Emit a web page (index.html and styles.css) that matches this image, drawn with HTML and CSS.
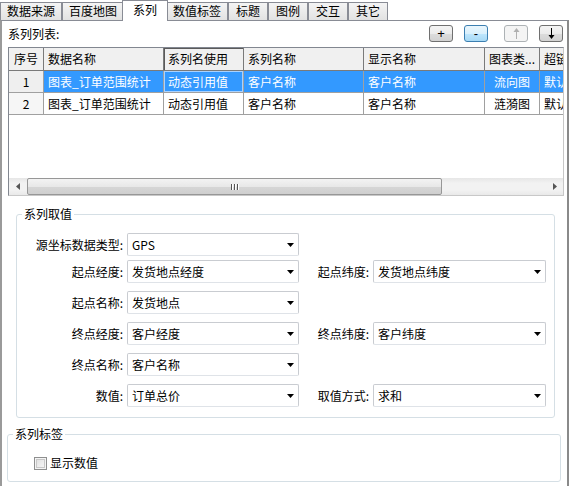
FILE: index.html
```html
<!DOCTYPE html>
<html lang="zh-CN">
<head>
<meta charset="utf-8">
<title>系列</title>
<link rel="stylesheet" href="styles.css">
</head>
<body>
<div class="tabs">
  <div class="tab">数据来源</div>
  <div class="tab">百度地图</div>
  <div class="tab active">系列</div>
  <div class="tab">数值标签</div>
  <div class="tab">标题</div>
  <div class="tab">图例</div>
  <div class="tab">交互</div>
  <div class="tab">其它</div>
</div>
<div class="panel">
  <div class="toolbar">
    <span class="caption">系列列表:</span>
    <div class="btns">
      <div class="btn">+</div>
      <div class="btn focus">-</div>
      <div class="btn disabled"><svg width="7" height="11" viewBox="0 0 7 11"><polygon points="3.5,0 6.5,4 0.5,4" fill="#b0b0b0"/><rect x="3" y="3" width="1" height="8" fill="#b0b0b0"/></svg></div>
      <div class="btn"><svg width="7" height="11" viewBox="0 0 7 11"><rect x="3" y="0" width="1" height="8" fill="#000"/><polygon points="3.5,11 6.5,7 0.5,7" fill="#000"/></svg></div>
    </div>
  </div>
  <div class="grid">
    <div class="rows">
      <div class="row head">
        <div class="cell c-center">序号</div>
        <div class="cell">数据名称</div>
        <div class="cell current">系列名使用</div>
        <div class="cell">系列名称</div>
        <div class="cell">显示名称</div>
        <div class="cell">图表类...</div>
        <div class="cell">超链接</div>
      </div>
      <div class="row selected">
        <div class="cell rowhead c-center">1</div>
        <div class="cell">图表_订单范围统计</div>
        <div class="cell focus-cell">动态引用值</div>
        <div class="cell">客户名称</div>
        <div class="cell">客户名称</div>
        <div class="cell c-center">流向图</div>
        <div class="cell">默认</div>
      </div>
      <div class="row">
        <div class="cell rowhead c-center">2</div>
        <div class="cell">图表_订单范围统计</div>
        <div class="cell">动态引用值</div>
        <div class="cell">客户名称</div>
        <div class="cell">客户名称</div>
        <div class="cell c-center">涟漪图</div>
        <div class="cell">默认</div>
      </div>
    </div>
    <div class="hscroll">
      <div class="sbtn"><svg width="4" height="7" viewBox="0 0 4 7"><polygon points="4,0 4,7 0,3.5" fill="#555"/></svg></div>
      <div class="thumb"><span class="grip"></span><span class="grip"></span><span class="grip"></span></div>
      <div class="track"></div>
      <div class="sbtn"><svg width="4" height="7" viewBox="0 0 4 7"><polygon points="0,0 0,7 4,3.5" fill="#555"/></svg></div>
    </div>
  </div>

  <fieldset class="group values">
    <legend>系列取值</legend>
    <div class="frow first">
      <label class="lbl">源坐标数据类型:</label>
      <div class="sel"><span class="val">GPS</span><svg class="caret" width="7" height="4" viewBox="0 0 7 4"><polygon points="0,0 7,0 3.5,4" fill="#000"/></svg></div>
    </div>
    <div class="frow">
      <label class="lbl">起点经度:</label>
      <div class="sel"><span class="val">发货地点经度</span><svg class="caret" width="7" height="4" viewBox="0 0 7 4"><polygon points="0,0 7,0 3.5,4" fill="#000"/></svg></div>
      <label class="lbl2">起点纬度:</label>
      <div class="sel wide"><span class="val">发货地点纬度</span><svg class="caret" width="7" height="4" viewBox="0 0 7 4"><polygon points="0,0 7,0 3.5,4" fill="#000"/></svg></div>
    </div>
    <div class="frow">
      <label class="lbl">起点名称:</label>
      <div class="sel"><span class="val">发货地点</span><svg class="caret" width="7" height="4" viewBox="0 0 7 4"><polygon points="0,0 7,0 3.5,4" fill="#000"/></svg></div>
    </div>
    <div class="frow">
      <label class="lbl">终点经度:</label>
      <div class="sel"><span class="val">客户经度</span><svg class="caret" width="7" height="4" viewBox="0 0 7 4"><polygon points="0,0 7,0 3.5,4" fill="#000"/></svg></div>
      <label class="lbl2">终点纬度:</label>
      <div class="sel wide"><span class="val">客户纬度</span><svg class="caret" width="7" height="4" viewBox="0 0 7 4"><polygon points="0,0 7,0 3.5,4" fill="#000"/></svg></div>
    </div>
    <div class="frow">
      <label class="lbl">终点名称:</label>
      <div class="sel"><span class="val">客户名称</span><svg class="caret" width="7" height="4" viewBox="0 0 7 4"><polygon points="0,0 7,0 3.5,4" fill="#000"/></svg></div>
    </div>
    <div class="frow last">
      <label class="lbl">数值:</label>
      <div class="sel"><span class="val">订单总价</span><svg class="caret" width="7" height="4" viewBox="0 0 7 4"><polygon points="0,0 7,0 3.5,4" fill="#000"/></svg></div>
      <label class="lbl2">取值方式:</label>
      <div class="sel wide"><span class="val">求和</span><svg class="caret" width="7" height="4" viewBox="0 0 7 4"><polygon points="0,0 7,0 3.5,4" fill="#000"/></svg></div>
    </div>
  </fieldset>

  <fieldset class="group labels">
    <legend>系列标签</legend>
    <div class="check-row">
      <span class="checkbox"></span>
      <span class="check-text">显示数值</span>
    </div>
  </fieldset>
</div>
</body>
</html>
```

FILE: styles.css
```css
* { box-sizing: border-box; }
html, body { margin: 0; padding: 0; }
body {
  width: 572px;
  height: 486px;
  overflow: hidden;
  background: #fff;
  font-family: "Noto Sans CJK SC", "Liberation Sans", sans-serif;
  font-size: 12px;
  color: #000;
}

/* tabs */
.tabs {
  display: flex;
  align-items: flex-start;
  height: 20px;
}
.tab {
  margin-top: 2px;
  height: 18px;
  min-width: 40px;
  padding: 0 6px;
  border: 1px solid #898c95;
  border-bottom: none;
  background: linear-gradient(#f4f4f4, #e2e2e2);
  line-height: 16px;
  text-align: center;
  white-space: nowrap;
}
.tab.active {
  position: relative;
  z-index: 1;
  margin: 0 -2px -1px;
  height: 21px;
  min-width: 46px;
  background: #fff;
  line-height: 18px;
}

/* panel */
.panel {
  width: 569px;
  height: 470px;
  border-top: 1px solid #898c95;
  border-left: 2px solid #9a9a9a;
  border-right: 2px solid #8a8a8a;
  background: #fff;
  padding-top: 4px;
}
.toolbar {
  display: flex;
  align-items: center;
  justify-content: space-between;
  height: 17px;
  padding: 0 4px 0 6px;
}
.caption { line-height: 17px; }
.btns { display: flex; gap: 11px; }
.btn {
  width: 24px;
  height: 17px;
  border: 1px solid #707070;
  border-radius: 3px;
  background: linear-gradient(#f4f4f4 0%, #ebebeb 50%, #dcdcdc 51%, #d2d2d2 100%);
  display: flex;
  align-items: center;
  justify-content: center;
  font-family: "Liberation Sans", sans-serif;
  font-size: 13px;
  line-height: 15px;
}
.btn.focus {
  border-color: #3c7fb1;
  background: linear-gradient(#eaf6fd 0%, #d9f0fc 50%, #bee6fd 51%, #a7d9f5 100%);
}
.btn.disabled {
  margin-left: 5px;
  border-color: #adb2b5;
  background: #f4f4f4;
}

/* data grid */
.grid {
  margin: 5px 0 0 6px;
  width: 556px;
  height: 149px;
  border: 1px solid #828790;
  border-right-color: #c8c8c8;
  border-bottom-color: #c8c8c8;
  display: flex;
  flex-direction: column;
  overflow: hidden;
}
.rows {
  flex: 1;
  overflow: hidden;
}
.row {
  display: grid;
  grid-template-columns: 35px 120px 80px 120px 121px 55px 60px;
  height: 22px;
  width: 591px;
}
.row.head { height: 23px; }
.cell {
  border-right: 1px solid #a0a0a0;
  border-bottom: 1px solid #a0a0a0;
  padding: 0 4px;
  line-height: 21px;
  white-space: nowrap;
  overflow: hidden;
}
.head .cell {
  background: #f0f0f0;
  border-right-color: #7a7a7a;
  border-bottom-color: #7a7a7a;
  line-height: 22px;
}
.head .cell.current {
  box-shadow: inset 1px 1px 0 #5a5a5a;
}
.c-center { text-align: center; }
.selected .cell {
  background: #3399ff;
  color: #fff;
}
.selected .cell.focus-cell {
  box-shadow: inset 0 0 0 1px #a9d2ff;
}
.cell.rowhead,
.selected .cell.rowhead {
  background: #efefef;
  color: #000;
}
.row:not(.selected) .cell.rowhead { background: #f6f6f6; }

/* horizontal scrollbar */
.hscroll {
  display: flex;
  height: 17px;
  background: linear-gradient(#e6e6e6, #f2f2f2 30%, #f2f2f2 70%, #e9e9e9);
}
.sbtn {
  width: 17px;
  height: 17px;
  display: flex;
  align-items: center;
  justify-content: center;
}
.thumb {
  margin-left: 1px;
  width: 415px;
  height: 17px;
  border: 1px solid #979797;
  border-radius: 2px;
  background: linear-gradient(#f3f3f3 0%, #e8e8e8 50%, #d6d6d6 51%, #cfcfcf 100%);
  display: flex;
  align-items: center;
  justify-content: center;
  gap: 1px;
}
.grip {
  width: 1px;
  height: 6px;
  background: #555;
  box-shadow: 1px 0 0 #fff;
  margin-right: 1px;
}
.track { flex: 1; }

/* group boxes */
.group {
  margin: 0;
  padding: 0;
  border: 1px solid #d5dfe5;
  border-radius: 3px;
  min-width: 0;
}
.group legend {
  margin-left: 5px;
  padding: 0 2px;
  line-height: 14px;
}
.values {
  margin: 11px 0 0 14px;
  width: 539px;
  padding: 12px 0 10px 0;
}
.frow {
  display: flex;
  align-items: center;
  height: 23px;
  margin-bottom: 8px;
}
.frow.first { margin-bottom: 4px; }
.frow.last { margin-bottom: 0; }
.lbl {
  width: 106px;
  margin-right: 4px;
  text-align: right;
  white-space: nowrap;
}
.lbl2 {
  width: 70px;
  margin-right: 4px;
  text-align: right;
  white-space: nowrap;
}
.sel {
  width: 172px;
  height: 23px;
  display: flex;
  align-items: center;
  padding: 0 4px 0 4px;
  border: 1px solid #c9ccd1;
  border-bottom-color: #dfe3e8;
  border-radius: 2px;
  background: #fff;
}
.sel.wide { width: 173px; }
.val {
  flex: 1;
  white-space: nowrap;
}
.caret { display: block; }

.labels {
  margin: 9px 0 0 5px;
  width: 554px;
  padding: 15px 0 11px 0;
}
.check-row {
  display: flex;
  align-items: center;
  height: 14px;
  padding-left: 26px;
  gap: 3px;
}
.checkbox {
  width: 13px;
  height: 13px;
  border: 1px solid #8e8f8f;
  background: linear-gradient(135deg, #dcdcdc, #fbfbfb);
  box-shadow: inset 0 0 0 1px #f4f4f4, inset 0 0 0 2px #c8c8c8;
}
.check-text { line-height: 14px; }
```
